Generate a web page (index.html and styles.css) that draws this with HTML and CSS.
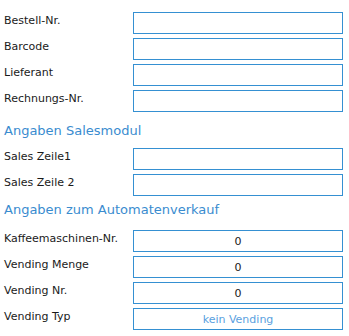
FILE: index.html
```html
<!DOCTYPE html>
<html lang="de">
<head>
  <meta charset="utf-8">
  <title>Artikel</title>
  <link rel="stylesheet" href="styles.css">
</head>
<body>
  <form class="form">
    <div class="row">
      <label class="label">Bestell-Nr.</label>
      <input class="field" type="text">
    </div>
    <div class="row">
      <label class="label">Barcode</label>
      <input class="field" type="text">
    </div>
    <div class="row">
      <label class="label">Lieferant</label>
      <input class="field" type="text">
    </div>
    <div class="row">
      <label class="label">Rechnungs-Nr.</label>
      <input class="field" type="text">
    </div>

    <h3 class="section section-sales">Angaben Salesmodul</h3>
    <div class="row">
      <label class="label">Sales Zeile1</label>
      <input class="field" type="text">
    </div>
    <div class="row">
      <label class="label">Sales Zeile 2</label>
      <input class="field" type="text">
    </div>

    <h3 class="section section-vending">Angaben zum Automatenverkauf</h3>
    <div class="row">
      <label class="label">Kaffeemaschinen-Nr.</label>
      <input class="field field-center" type="text" value="0">
    </div>
    <div class="row">
      <label class="label">Vending Menge</label>
      <input class="field field-center" type="text" value="0">
    </div>
    <div class="row">
      <label class="label">Vending Nr.</label>
      <input class="field field-center" type="text" value="0">
    </div>
    <div class="row">
      <label class="label">Vending Typ</label>
      <button class="field field-choice" type="button">kein Vending</button>
    </div>
  </form>
</body>
</html>
```

FILE: styles.css
```css
*, *::before, *::after {
  margin: 0;
  padding: 0;
  box-sizing: border-box;
}

body {
  padding: 12px 6px 0 4px;
  background-color: #FFFFFF;
  color: #1a1a1a;
  font-family: "DejaVu Sans", Verdana, sans-serif;
  font-size: 11px;
}

.row {
  display: grid;
  grid-template-columns: 129px 210px;
  margin-bottom: 4px;
}

.label {
  padding-top: 2px;
  line-height: 13px;
}

.field {
  height: 22px;
  border: 1px solid #3590d2;
  background-color: #FFFFFF;
  color: #1a1a1a;
  font-family: inherit;
  font-size: 11px;
  outline: none;
}

.field-center {
  text-align: center;
}

.field-choice {
  color: #5a9fe0;
  cursor: pointer;
}

.section {
  color: #3a8ccf;
  font-size: 13px;
  font-weight: normal;
  line-height: 16px;
}

.section-sales {
  margin: 11px 0 9px;
}

.section-vending {
  margin: 6px 0 12px;
}
```
